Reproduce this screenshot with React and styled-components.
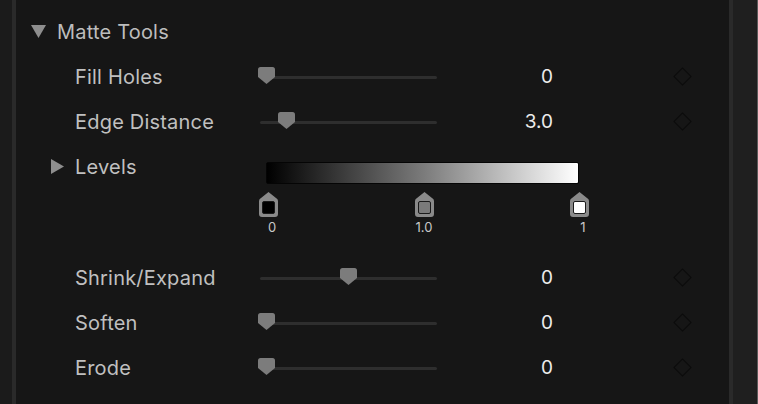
import React from 'react'
import styled, { createGlobalStyle } from 'styled-components'

const GlobalStyle = createGlobalStyle`
  html, body {
    margin: 0;
    padding: 0;
    background: #1b1b1b;
  }
  body {
    font-family: Inter, "Liberation Sans", sans-serif;
  }
`

const Page = styled.div`
  display: flex;
  width: 758px;
  height: 404px;
  overflow: hidden;
`

const Gutter = styled.div`
  width: ${props => props.w}px;
  flex-shrink: 0;
  background: ${props => props.bg};
  border-right: ${props => (props.line ? '1px solid #5a5a5a' : 'none')};
  box-sizing: border-box;
`

const Panel = styled.div`
  flex: 1;
  background: #161616;
  padding-top: 9px;
`

const Header = styled.div`
  display: flex;
  align-items: center;
  height: 45px;
  padding-left: 15px;
  gap: 11px;
  color: #bdbdbd;
  font-size: 20px;
  letter-spacing: 0.2px;
`

const Row = styled.div`
  display: grid;
  grid-template-columns: 24px 185px 177px 116px 121px 17px;
  align-items: ${props => (props.top ? 'start' : 'center')};
  height: ${props => props.h || 45}px;
  padding-left: 35px;
`

const Twisty = styled.div`
  display: flex;
  align-items: center;
  height: 45px;
`

const Label = styled.div`
  display: flex;
  align-items: center;
  height: 45px;
  color: #c0c0c0;
  font-size: 20px;
  letter-spacing: 0.2px;
  white-space: nowrap;
`

const Track = styled.div`
  position: relative;
  top: 1px;
  height: 3px;
  background: #2e2e2e;
  border-radius: 2px;
`

const Thumb = styled.svg`
  position: absolute;
  top: -9px;
  width: 17px;
  height: 17px;
  margin-left: -8.5px;
`

const Value = styled.div`
  text-align: right;
  color: #ececec;
  font-size: 19px;
`

const Keyframe = styled.div`
  width: 11px;
  height: 11px;
  margin: 0 auto;
  border: 1.5px solid #0b0b0b;
  transform: rotate(45deg);
`

const LevelsBox = styled.div`
  grid-column: 3 / span 3;
  padding-top: 18px;
  padding-left: 6px;
  width: 313px;
`

const Gradient = styled.div`
  height: 20px;
  border: 1px solid #050505;
  border-radius: 2px;
  background: linear-gradient(to right, #000 0%, #7a7a7a 50%, #fff 100%);
`

const HandleRail = styled.div`
  position: relative;
  height: 25px;
  margin-top: 8px;
`

const Handle = styled.svg`
  position: absolute;
  top: 0;
  width: 19px;
  height: 25px;
  margin-left: -8.5px;
`

const TickRail = styled.div`
  position: relative;
  height: 14px;
  margin-top: 3px;
`

const Tick = styled.span`
  position: absolute;
  top: 0;
  transform: translateX(-50%);
  color: #c8c8c8;
  font-size: 13px;
  line-height: 14px;
`

const Triangle = ({ dir }) =>
  dir === 'down' ? (
    <svg width="15" height="13" viewBox="0 0 15 13">
      <path d="M0 0 H15 L7.5 13 Z" fill="#8e8e8e" />
    </svg>
  ) : (
    <svg width="13" height="15" viewBox="0 0 13 15">
      <path d="M0 0 L13 7.5 L0 15 Z" fill="#8e8e8e" />
    </svg>
  )

const Slider = ({ pos }) => (
  <Track>
    <Thumb viewBox="0 0 17 17" style={{ left: `${pos}px` }}>
      <path d="M2.5 0 H14.5 Q17 0 17 2.5 V10 L8.5 17 L0 10 V2.5 Q0 0 2.5 0 Z" fill="#7c7c7c" />
    </Thumb>
  </Track>
)

const LevelHandle = ({ left, fill }) => (
  <Handle viewBox="0 0 19 25" style={{ left: `${left}px` }}>
    <path d="M9.5 0 L17 6 Q19 7 19 9 V22 Q19 25 16 25 H3 Q0 25 0 22 V9 Q0 7 2 6 Z" fill="#8a8a8a" />
    <rect x="3.5" y="9.5" width="12" height="12" rx="1.5" fill={fill} stroke="#1a1a1a" strokeWidth="1" />
  </Handle>
)

const params = [
  { name: 'Fill Holes', value: '0', pos: 6 },
  { name: 'Edge Distance', value: '3.0', pos: 26 },
]

const params2 = [
  { name: 'Shrink/Expand', value: '0', pos: 88 },
  { name: 'Soften', value: '0', pos: 6 },
  { name: 'Erode', value: '0', pos: 6 },
]

const ParamRow = ({ name, value, pos }) => (
  <Row>
    <span />
    <Label>{name}</Label>
    <Slider pos={pos} />
    <Value>{value}</Value>
    <span />
    <Keyframe />
  </Row>
)

export default function App() {
  return (
    <>
      <GlobalStyle />
      <Page>
        <Gutter w={12} bg="#1b1b1b" />
        <Gutter w={4} bg="#2a2a2a" />
        <Panel>
          <Header>
            <Triangle dir="down" />
            Matte Tools
          </Header>
          {params.map(p => (
            <ParamRow key={p.name} {...p} />
          ))}
          <Row top h={111}>
            <Twisty>
              <Triangle dir="right" />
            </Twisty>
            <Label>Levels</Label>
            <LevelsBox>
              <Gradient />
              <HandleRail>
                <LevelHandle left={1} fill="#000" />
                <LevelHandle left={157} fill="#7a7a7a" />
                <LevelHandle left={312} fill="#fff" />
              </HandleRail>
              <TickRail>
                <Tick style={{ left: '6px' }}>0</Tick>
                <Tick style={{ left: '158px' }}>1.0</Tick>
                <Tick style={{ left: '317px' }}>1</Tick>
              </TickRail>
            </LevelsBox>
          </Row>
          {params2.map(p => (
            <ParamRow key={p.name} {...p} />
          ))}
        </Panel>
        <Gutter w={4} bg="#2a2a2a" />
        <Gutter w={25} bg="#1f1f1f" line />
      </Page>
    </>
  )
}
